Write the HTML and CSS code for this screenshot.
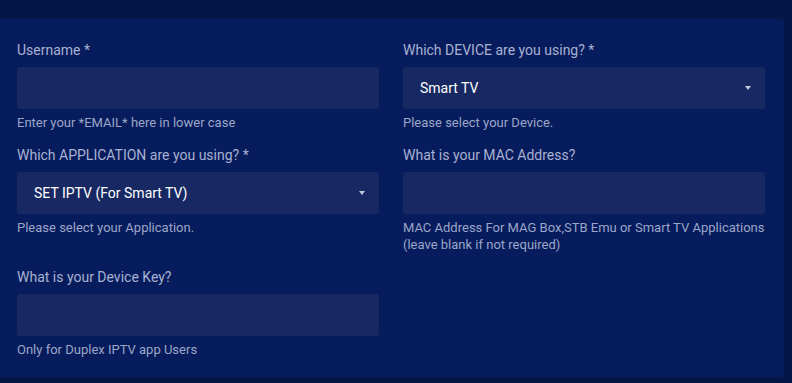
FILE: index.html
```html
<!DOCTYPE html>
<html lang="en">
	<head>
		<meta charset="UTF-8" />
		<meta name="viewport" content="width=device-width, initial-scale=1.0" />
		<title>Order Form</title>
		<link rel="stylesheet" href="styles.css">
	</head>
	<body>
		<div class="page">
			<form class="form-card">
				<div class="field">
					<label class="field-label">Username *</label>
					<div class="input"></div>
					<div class="help">Enter your *EMAIL* here in lower case</div>
				</div>

				<div class="field">
					<label class="field-label">Which DEVICE are you using? *</label>
					<div class="input select">
						<span class="select-value">Smart TV</span>
						<span class="caret"></span>
					</div>
					<div class="help">Please select your Device.</div>
				</div>

				<div class="field">
					<label class="field-label">Which APPLICATION are you using? *</label>
					<div class="input select">
						<span class="select-value">SET IPTV (For Smart TV)</span>
						<span class="caret"></span>
					</div>
					<div class="help">Please select your Application.</div>
				</div>

				<div class="field">
					<label class="field-label">What is your MAC Address?</label>
					<div class="input"></div>
					<div class="help">MAC Address For MAG Box,STB Emu or Smart TV Applications (leave blank if not required)</div>
				</div>

				<div class="field">
					<label class="field-label">What is your Device Key?</label>
					<div class="input"></div>
					<div class="help">Only for Duplex IPTV app Users</div>
				</div>
			</form>
		</div>
	</body>
</html>
```

FILE: styles.css
```css
:root {
	--page-bg: #041548;
	--card-bg: #071c5c;
	--input-bg: #172862;
	--label-color: #a8b2d2;
	--help-color: #9ba6c8;
	--caret-color: #c3c9dd;
}

* {
	margin: 0;
	padding: 0;
	box-sizing: border-box;
}

body {
	font-family: Roboto, "Liberation Sans", sans-serif;
	background-color: var(--page-bg);
	min-height: 100vh;
}

.page {
	padding: 19px 8px 4px 0;
}

.form-card {
	display: grid;
	grid-template-columns: 1fr 1fr;
	column-gap: 24px;
	row-gap: 14px;
	background-color: var(--card-bg);
	border-radius: 0 4px 4px 0;
	padding: 21px 19px 19px 17px;
}

.field {
	display: flex;
	flex-direction: column;
}

.field-label {
	font-size: 14px;
	line-height: 20px;
	color: var(--label-color);
	margin-bottom: 7px;
}

.input {
	height: 42px;
	background-color: var(--input-bg);
	border-radius: 3px;
}

.select {
	display: flex;
	align-items: center;
	justify-content: space-between;
	padding: 0 14px 0 17px;
}

.select-value {
	color: #ffffff;
	font-size: 14px;
}

.caret {
	width: 0;
	height: 0;
	border-left: 3.5px solid transparent;
	border-right: 3.5px solid transparent;
	border-top: 4px solid var(--caret-color);
}

.help {
	font-size: 13px;
	line-height: 17px;
	color: var(--help-color);
	margin-top: 5px;
}
```
